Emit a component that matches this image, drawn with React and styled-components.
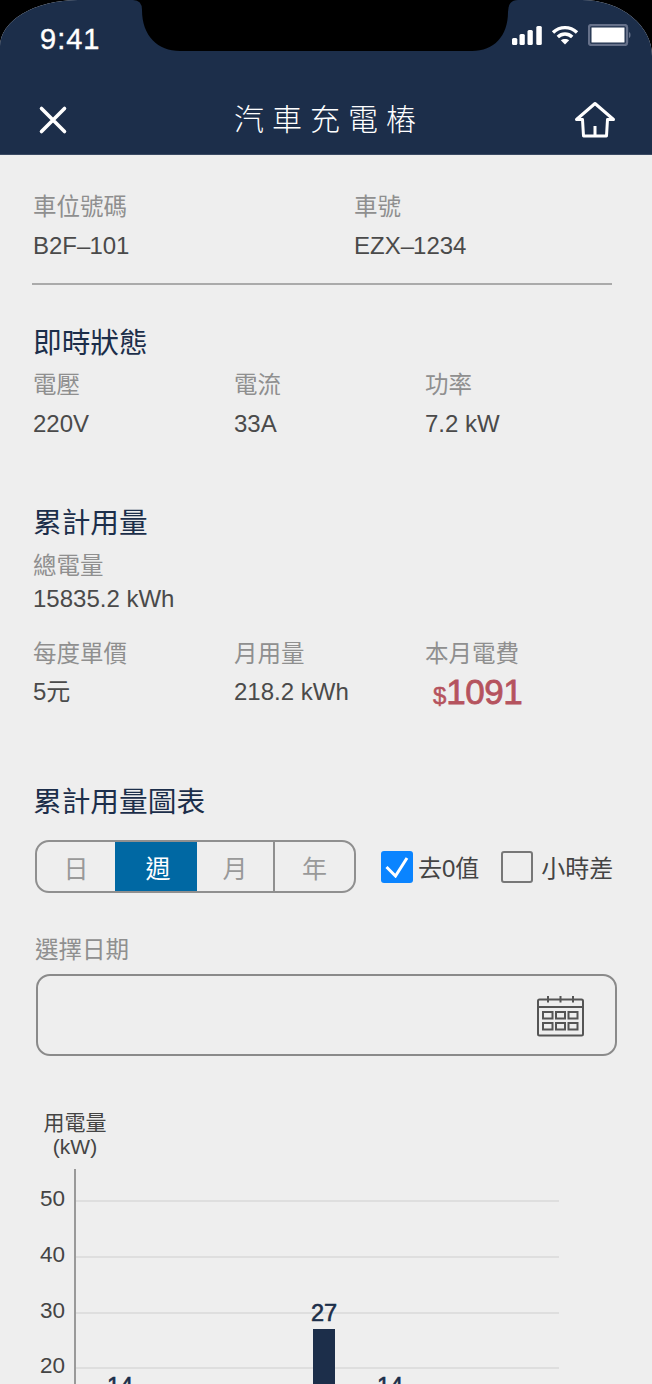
import React from "react";
import styled, { createGlobalStyle } from "styled-components";

const FONT = `"Liberation Sans", "Noto Sans CJK TC", sans-serif`;

const GlobalStyle = createGlobalStyle`
  html, body {
    margin: 0;
    padding: 0;
    background: #000;
  }
  body {
    font-family: ${FONT};
  }
`;

const Screen = styled.div`
  position: relative;
  width: 652px;
  height: 1384px;
  overflow: hidden;
  background: #eeeeee;
  border-radius: 78px 70px 0 0 / 46px 56px 0 0;
`;

const Header = styled.header`
  height: 155px;
  box-sizing: border-box;
  background: #1c2e4a;
  border-bottom: 1px solid #3a4a63;
  display: flex;
  flex-direction: column;
`;

const StatusBar = styled.div`
  height: 86px;
  box-sizing: border-box;
  padding: 21px 20px 0 40px;
  display: flex;
  justify-content: space-between;
  align-items: flex-start;
`;

const Clock = styled.div`
  color: #fff;
  font-size: 29px;
  line-height: 36px;
  font-weight: 500;
  letter-spacing: 1px;
  -webkit-text-stroke: 0.4px #fff;
`;

const StatusIcons = styled.div`
  display: flex;
  align-items: center;
  gap: 9px;
  margin-top: 3px;
`;

const Notch = styled.svg`
  position: absolute;
  top: 0;
  left: 130px;
`;

const NavBar = styled.div`
  flex: 1;
  display: flex;
  align-items: center;
  justify-content: space-between;
  padding: 0 36px 0 38px;
`;

const NavTitle = styled.div`
  color: #fff;
  font-size: 30px;
  line-height: 40px;
  font-weight: 300;
  letter-spacing: 8px;
  margin-right: -8px;
  margin-left: 8px;
`;

const Content = styled.main`
  padding: 37px 35px 0 33px;
`;

const Row = styled.div`
  display: grid;
  grid-template-columns: ${(p) => p.$columns};
`;

const Label = styled.div`
  color: #8f8f8f;
  font-size: 23.5px;
  line-height: 30px;
`;

const Value = styled.div`
  color: #4a4a4a;
  font-size: 24px;
  line-height: 30px;
  margin-top: ${(p) => p.$gap || 9}px;
`;

const Dash = styled.span`
  letter-spacing: -2.5px;
  margin-right: 1.5px;
`;

const Divider = styled.hr`
  border: 0;
  height: 2px;
  margin: 22px 5px 0 -1px;
  background: #aaa;
`;

const SectionTitle = styled.h2`
  color: #1c2e4a;
  font-size: 28.7px;
  line-height: 30px;
  font-weight: 400;
  margin: ${(p) => p.$top}px 0 ${(p) => p.$bottom}px 0;
`;

const Price = styled.div`
  color: #b5535e;
  font-weight: 400;
  font-size: 35px;
  line-height: 30px;
  letter-spacing: -0.5px;
  -webkit-text-stroke: 0.8px #b5535e;
  margin: 8px 0 0 8px;
  span {
    font-size: 24px;
    letter-spacing: 0;
    -webkit-text-stroke: 0.5px #b5535e;
  }
`;

const Spaced = styled.div`
  margin-top: ${(p) => p.$top}px;
`;

const Controls = styled.div`
  display: flex;
  align-items: center;
  margin: 23px 0 0 2px;
`;

const Segments = styled.div`
  display: flex;
  width: 321px;
  height: 53px;
  box-sizing: border-box;
  border: 2px solid #8f8f8f;
  border-radius: 14px;
  overflow: hidden;
`;

const Segment = styled.div`
  width: ${(p) => p.$width}px;
  box-sizing: border-box;
  display: flex;
  align-items: center;
  justify-content: center;
  font-size: 25px;
  color: ${(p) => (p.$active ? "#fff" : "#999")};
  background: ${(p) => (p.$active ? "#0068a3" : "transparent")};
  margin: ${(p) => (p.$active ? "-2px 0" : "0")};
  padding-left: ${(p) => (p.$active ? 4 : 0)}px;
  border-right: ${(p) => (p.$divider ? "2px solid #8f8f8f" : "0")};
`;

const CheckGroup = styled.label`
  display: flex;
  align-items: center;
  gap: ${(p) => p.$gap}px;
  margin-left: ${(p) => p.$left}px;
  color: #444;
  font-size: 24px;
`;

const Box = styled.span`
  width: 32px;
  height: 32px;
  box-sizing: border-box;
  border-radius: 3px;
  display: flex;
  align-items: center;
  justify-content: center;
  background: ${(p) => (p.$checked ? "#0a84ff" : "transparent")};
  border: ${(p) => (p.$checked ? "0" : "2px solid #777")};
`;

const DateLabel = styled(Label)`
  margin: 42px 0 0 2px;
`;

const DateField = styled.div`
  height: 82px;
  width: 581px;
  box-sizing: border-box;
  margin: 9px 0 0 3px;
  border: 2px solid #8a8a8a;
  border-radius: 14px;
  display: flex;
  align-items: center;
  justify-content: flex-end;
  padding: 3px 30px 0 0;
`;

const Chart = styled.svg`
  display: block;
  margin: 50px 0 0 -33px;
`;

const GRID = [
  { y: 1201, label: 50 },
  { y: 1257, label: 40 },
  { y: 1313, label: 30 },
  { y: 1368, label: 20 },
];

const BARS = [
  { x: 120, value: 14, top: 1402 },
  { x: 324, value: 27, top: 1329 },
  { x: 390, value: 14, top: 1402 },
];

const CHART_TOP = 1106;

function UsageChart() {
  return (
    <Chart width="652" height="280" viewBox={`0 ${CHART_TOP} 652 280`}>
      <text x="75" y="1130" textAnchor="middle" fontSize="21" fill="#444" fontFamily={FONT}>
        用電量
      </text>
      <text x="75" y="1154" textAnchor="middle" fontSize="21" fill="#444" fontFamily={FONT}>
        (kW)
      </text>
      {GRID.map((g) => (
        <g key={g.y}>
          <line x1="76" x2="559" y1={g.y} y2={g.y} stroke="#dedede" strokeWidth="2" />
          <text x="65" y={g.y + 5} textAnchor="end" fontSize="22.5" fill="#444" fontFamily={FONT}>
            {g.label}
          </text>
        </g>
      ))}
      <line x1="75" x2="75" y1="1169" y2="1386" stroke="#999" strokeWidth="2" />
      {BARS.map((b) => (
        <g key={b.x}>
          <rect x={b.x - 11} y={b.top} width="22" height="100" fill="#1c2e4a" />
          <text
            x={b.x}
            y={b.top - 8}
            textAnchor="middle"
            fontSize="23.5"
            fill="#1c2e4a"
            stroke="#1c2e4a"
            strokeWidth="0.6"
            fontFamily={FONT}
          >
            {b.value}
          </text>
        </g>
      ))}
    </Chart>
  );
}

function Signal() {
  return (
    <svg width="31" height="19" viewBox="0 0 31 19" fill="#fff">
      <rect x="1" y="12" width="5.3" height="7" rx="1.5" />
      <rect x="8.5" y="8" width="5.3" height="11" rx="1.5" />
      <rect x="16.5" y="4" width="5.3" height="15" rx="1.5" />
      <rect x="25.3" y="0" width="5.5" height="19" rx="1.5" />
    </svg>
  );
}

function Wifi() {
  return (
    <svg width="28" height="20" viewBox="0 0 28 20" fill="none" stroke="#fff" strokeWidth="3.4">
      <path d="M2 7.5C9 1 19 1 26 7.5" />
      <path d="M6.8 12C11 8 17 8 21.2 12" />
      <path d="M14 19.5L9.8 15.3C12 13.4 16 13.4 18.2 15.3Z" fill="#fff" stroke="none" />
    </svg>
  );
}

function Battery() {
  return (
    <svg width="44" height="22" viewBox="0 0 44 22">
      <rect x="1" y="1" width="38" height="20" rx="2.5" fill="none" stroke="#66718a" strokeWidth="2.4" />
      <rect x="3.5" y="3.5" width="33" height="15" fill="#fff" />
      <path d="M41 8C43 8.5 43 13.5 41 14Z" fill="#66718a" />
    </svg>
  );
}

function CloseIcon() {
  return (
    <svg width="30" height="30" viewBox="0 0 30 30" stroke="#fff" strokeWidth="3.6" strokeLinecap="round">
      <path d="M3.5 3.5L26.5 26.5M26.5 3.5L3.5 26.5" />
    </svg>
  );
}

function HomeIcon() {
  return (
    <svg width="42" height="38" viewBox="0 0 42 38" fill="none" stroke="#fff" strokeWidth="3" strokeLinejoin="round">
      <path d="M21 2.5L2.5 18.5H8.5L9.5 35H32.5L33.5 18.5H39.5Z" />
      <path d="M21 25V35" />
    </svg>
  );
}

function CalendarIcon() {
  return (
    <svg width="48" height="41" viewBox="0 0 48 41" fill="none" stroke="#555" strokeWidth="2">
      <rect x="1" y="3.5" width="45" height="36" rx="1.5" />
      <path d="M1 11H46" />
      <path d="M11 0V6.5M23.5 0V6.5M36 0V6.5" />
      <rect x="6" y="16" width="9.5" height="6.5" />
      <rect x="19" y="16" width="9" height="6.5" />
      <rect x="31.5" y="16" width="9" height="6.5" />
      <rect x="6" y="27" width="9.5" height="6.5" />
      <rect x="19" y="27" width="9" height="6.5" />
      <rect x="31.5" y="27" width="9" height="6.5" />
    </svg>
  );
}

export default function App() {
  return (
    <>
      <GlobalStyle />
      <Screen>
        <Header>
          <StatusBar>
            <Clock>9:41</Clock>
            <StatusIcons>
              <Signal />
              <Wifi />
              <Battery />
            </StatusIcons>
          </StatusBar>
          <NavBar>
            <CloseIcon />
            <NavTitle>汽車充電樁</NavTitle>
            <HomeIcon />
          </NavBar>
        </Header>
        <Notch width="392" height="52" viewBox="0 0 392 52" fill="#000">
          <path d="M0 0H3Q12 0 12 10C12 36 28 51 50 51H342C364 51 378 36 378 12Q378 0 388 0H392Z" />
        </Notch>

        <Content>
          <Row $columns="321px 1fr">
            <div>
              <Label>車位號碼</Label>
              <Value>B2F<Dash>–</Dash>101</Value>
            </div>
            <div>
              <Label>車號</Label>
              <Value>EZX<Dash>–</Dash>1234</Value>
            </div>
          </Row>
          <Divider />

          <SectionTitle $top={43} $bottom={12}>即時狀態</SectionTitle>
          <Row $columns="201px 191px 1fr">
            <div>
              <Label>電壓</Label>
              <Value>220V</Value>
            </div>
            <div>
              <Label>電流</Label>
              <Value>33A</Value>
            </div>
            <div>
              <Label>功率</Label>
              <Value>7.2 kW</Value>
            </div>
          </Row>

          <SectionTitle $top={69} $bottom={13}>累計用量</SectionTitle>
          <Label>總電量</Label>
          <Value $gap={3}>15835.2 kWh</Value>
          <Spaced $top={25}>
            <Row $columns="201px 191px 1fr">
              <div>
                <Label>每度單價</Label>
                <Value $gap={8}>5元</Value>
              </div>
              <div>
                <Label>月用量</Label>
                <Value $gap={8}>218.2 kWh</Value>
              </div>
              <div>
                <Label>本月電費</Label>
                <Price>
                  <span>$</span>1091
                </Price>
              </div>
            </Row>
          </Spaced>

          <SectionTitle $top={76} $bottom={0}>累計用量圖表</SectionTitle>
          <Controls>
            <Segments>
              <Segment $width={78}>日</Segment>
              <Segment $width={82} $active>週</Segment>
              <Segment $width={78} $divider>月</Segment>
              <Segment $width={79}>年</Segment>
            </Segments>
            <CheckGroup $gap={5} $left={25}>
              <Box $checked>
                <svg width="24" height="22" viewBox="0 0 24 22" fill="none" stroke="#fff" strokeWidth="3">
                  <path d="M1.5 11L10.5 20L22 2" />
                </svg>
              </Box>
              去0值
            </CheckGroup>
            <CheckGroup $gap={8} $left={22}>
              <Box />
              小時差
            </CheckGroup>
          </Controls>

          <DateLabel>選擇日期</DateLabel>
          <DateField>
            <CalendarIcon />
          </DateField>

          <UsageChart />
        </Content>
      </Screen>
    </>
  );
}
